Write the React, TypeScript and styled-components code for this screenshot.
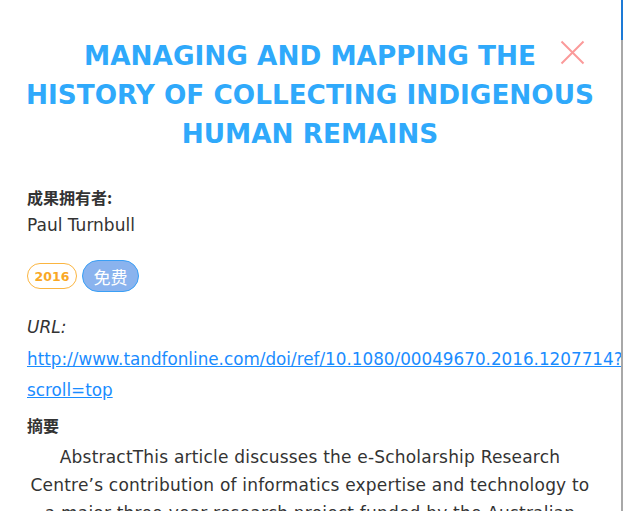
import React from "react";
import styled, { createGlobalStyle } from "styled-components";

const GlobalStyle = createGlobalStyle`
  html, body { margin: 0; padding: 0; background: #ffffff; }
  body { font-family: "DejaVu Sans", "Noto Sans CJK SC", sans-serif; }
`;

const Page = styled.div`
  display: flex;
  width: 623px;
  height: 511px;
  overflow: hidden;
  background: #ffffff;
`;

const Panel = styled.div`
  position: relative;
  flex: 1;
  padding: 37px 28px 0 27px;
  overflow: hidden;
  color: #333333;
`;

const Track = styled.div`
  width: 2px;
  display: flex;
  flex-direction: column;
  background: #a8a8a8;
`;

const Thumb = styled.div`
  height: 40px;
  background: #1d7ad6;
`;

const Title = styled.h1`
  margin: 0 -6px;
  text-align: center;
  font-family: "DejaVu Sans", sans-serif;
  font-weight: 700;
  font-size: 26.3px;
  line-height: 39px;
  color: #2fa9fb;
  text-transform: uppercase;
  white-space: nowrap;
`;

const Close = styled.button`
  position: absolute;
  top: 40px;
  right: 36px;
  width: 25px;
  height: 25px;
  padding: 0;
  border: none;
  background: transparent;
  cursor: pointer;
`;

const Label = styled.div<{ $mt?: number }>`
  margin-top: ${(p) => p.$mt ?? 0}px;
  font-family: "Noto Sans CJK SC", sans-serif;
  font-weight: 700;
  font-size: 16px;
  line-height: 28px;
  color: #333333;
`;

const Owner = styled.div`
  font-size: 17px;
  line-height: 28px;
  color: #333333;
`;

const Tags = styled.div`
  display: flex;
  align-items: center;
  gap: 5px;
  margin-top: 21px;
`;

const Tag = styled.span<{ $variant: "year" | "free" }>`
  display: inline-flex;
  align-items: center;
  justify-content: center;
  box-sizing: border-box;
  border-radius: 16px;
  ${(p) =>
    p.$variant === "year"
      ? `
    height: 26px;
    width: 50px;
    border: 1px solid #fbb540;
    color: #f9a825;
    font-weight: 700;
    font-size: 12.5px;
  `
      : `
    height: 32px;
    width: 57px;
    border: 1px solid #3a9ff5;
    background: #8ab3ee;
    color: #ffffff;
    font-family: "Noto Sans CJK SC", sans-serif;
    font-size: 17px;
  `}
`;

const UrlLabel = styled.div`
  margin-top: 20px;
  font-style: italic;
  font-size: 17px;
  line-height: 30px;
  color: #333333;
`;

const Link = styled.a`
  display: block;
  margin: 2px -30px 0 0;
  font-size: 16.8px;
  line-height: 31px;
  color: #1a8cff;
  text-decoration: underline;
`;

const Abstract = styled.p`
  margin: 4px 0 0;
  text-align: center;
  font-size: 17px;
  letter-spacing: 0.2px;
  line-height: 28px;
  color: #333333;
`;

export default function App() {
  return (
    <>
      <GlobalStyle />
      <Page>
        <Panel>
          <Title>
            Managing and Mapping the
            <br />
            History of Collecting Indigenous
            <br />
            Human Remains
          </Title>
          <Close aria-label="close">
            <svg width="25" height="25" viewBox="0 0 25 25">
              <path d="M1.5 1.5 L23.5 23.5 M23.5 1.5 L1.5 23.5" stroke="#fb9a9a" strokeWidth="2" fill="none" />
            </svg>
          </Close>
          <Label $mt={29}>成果拥有者:</Label>
          <Owner>Paul Turnbull</Owner>
          <Tags>
            <Tag $variant="year">2016</Tag>
            <Tag $variant="free">免费</Tag>
          </Tags>
          <UrlLabel>URL:</UrlLabel>
          <Link href="#">
            http://www.tandfonline.com/doi/ref/10.1080/00049670.2016.1207714?
            <wbr />
            scroll=top
          </Link>
          <Label $mt={5}>摘要</Label>
          <Abstract>
            AbstractThis article discusses the e-Scholarship Research Centre’s contribution of informatics expertise and technology to a major three-year research project funded by the Australian Research Council.
          </Abstract>
        </Panel>
        <Track>
          <Thumb />
        </Track>
      </Page>
    </>
  );
}
